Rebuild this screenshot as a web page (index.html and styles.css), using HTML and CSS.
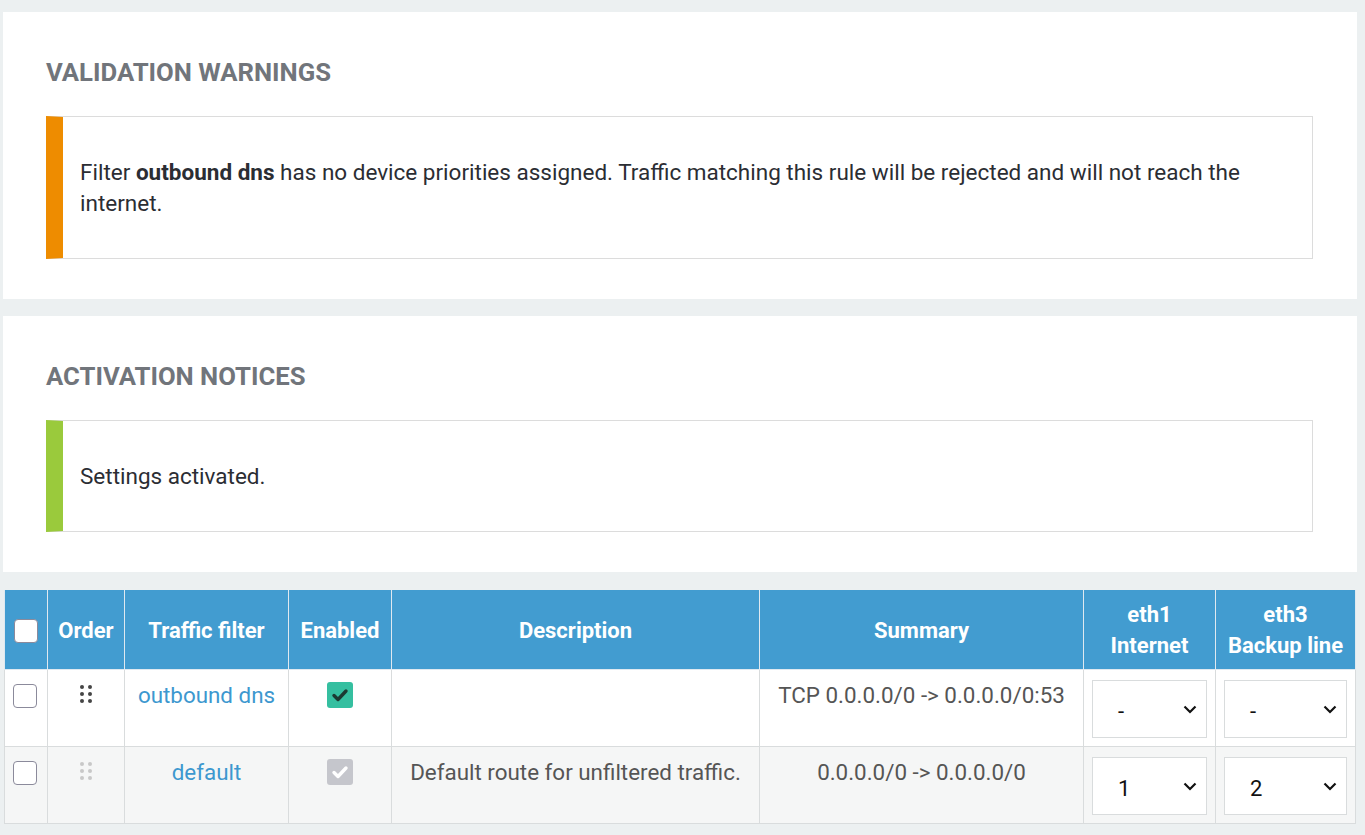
FILE: index.html
```html
<!DOCTYPE html>
<html lang="en">
<head>
<meta charset="utf-8">
<title>Traffic filters</title>
<link rel="stylesheet" href="styles.css">
</head>
<body>
<div class="page">
  <section class="panel">
    <h2 class="panel-title">VALIDATION WARNINGS</h2>
    <div class="alert alert-warning">
      Filter <strong>outbound dns</strong> has no device priorities assigned. Traffic matching this rule will be rejected and will not reach the internet.
    </div>
  </section>
  <section class="panel">
    <h2 class="panel-title">ACTIVATION NOTICES</h2>
    <div class="alert alert-success">Settings activated.</div>
  </section>
  <div class="table-wrap">
    <table class="grid">
      <colgroup>
        <col class="c-check"><col class="c-order"><col class="c-name"><col class="c-enabled">
        <col class="c-desc"><col class="c-summary"><col class="c-eth1"><col class="c-eth3">
      </colgroup>
      <thead>
        <tr>
          <th class="th-check"><span class="cb cb-head"></span></th>
          <th>Order</th>
          <th>Traffic filter</th>
          <th>Enabled</th>
          <th>Description</th>
          <th>Summary</th>
          <th>eth1<br>Internet</th>
          <th>eth3<br>Backup line</th>
        </tr>
      </thead>
      <tbody>
        <tr>
          <td class="cell-check"><span class="cb"></span></td>
          <td class="center"><span class="drag"><i></i><i></i><i></i><i></i><i></i><i></i></span></td>
          <td class="center"><a class="link" href="#">outbound dns</a></td>
          <td class="center"><span class="toggle on"><svg viewBox="0 0 26 26" width="26" height="26"><path d="M7 13.5l4 4 8-8.5" fill="none" stroke="#1b3a32" stroke-width="3.4" stroke-linecap="round" stroke-linejoin="round"/></svg></span></td>
          <td class="center"></td>
          <td class="center">TCP 0.0.0.0/0 -&gt; 0.0.0.0/0:53</td>
          <td class="cell-select"><div class="select"><span>-</span><svg viewBox="0 0 14 9" width="14" height="9"><path d="M1.5 1.5l5.5 5.5 5.5-5.5" fill="none" stroke="#111" stroke-width="2.2"/></svg></div></td>
          <td class="cell-select"><div class="select"><span>-</span><svg viewBox="0 0 14 9" width="14" height="9"><path d="M1.5 1.5l5.5 5.5 5.5-5.5" fill="none" stroke="#111" stroke-width="2.2"/></svg></div></td>
        </tr>
        <tr class="alt">
          <td class="cell-check"><span class="cb"></span></td>
          <td class="center"><span class="drag disabled"><i></i><i></i><i></i><i></i><i></i><i></i></span></td>
          <td class="center"><a class="link" href="#">default</a></td>
          <td class="center"><span class="toggle off"><svg viewBox="0 0 26 26" width="26" height="26"><path d="M7 13.5l4 4 8-8.5" fill="none" stroke="#ffffff" stroke-width="3.4" stroke-linecap="round" stroke-linejoin="round"/></svg></span></td>
          <td class="center">Default route for unfiltered traffic.</td>
          <td class="center">0.0.0.0/0 -&gt; 0.0.0.0/0</td>
          <td class="cell-select"><div class="select"><span>1</span><svg viewBox="0 0 14 9" width="14" height="9"><path d="M1.5 1.5l5.5 5.5 5.5-5.5" fill="none" stroke="#111" stroke-width="2.2"/></svg></div></td>
          <td class="cell-select"><div class="select"><span>2</span><svg viewBox="0 0 14 9" width="14" height="9"><path d="M1.5 1.5l5.5 5.5 5.5-5.5" fill="none" stroke="#111" stroke-width="2.2"/></svg></div></td>
        </tr>
      </tbody>
    </table>
  </div>
</div>
</body>
</html>
```
FILE: styles.css
```css
html, body {
  margin: 0;
  padding: 0;
  background: #ecf0f1;
  font-family: Roboto, "Liberation Sans", sans-serif;
  color: #2b2d33;
}

.page {
  padding: 12px 8px 12px 3px;
  display: flex;
  flex-direction: column;
  gap: 17px;
}

.panel {
  background: #ffffff;
  padding: 46px 44px 40px 43px;
}

.panel-title {
  margin: 0 0 29px;
  font-size: 25.7px;
  line-height: 29px;
  font-weight: 700;
  color: #71757b;
}

.alert {
  border: 1px solid #dcdcdc;
  border-left-width: 17px;
  padding: 40px 17px 39px 17px;
  font-size: 22.5px;
  line-height: 31px;
  color: #2b2d33;
}

.alert strong {
  font-weight: 700;
}

.alert-warning {
  border-left-color: #ee8c00;
}

.alert-success {
  border-left-color: #9aca3c;
}

.table-wrap {
  padding: 0 2px 0 1px;
  margin-top: 1px;
}

.grid {
  width: 100%;
  border-collapse: collapse;
  table-layout: fixed;
  font-size: 22.4px;
  line-height: 31px;
  color: #555555;
}

.c-check { width: 43px; }
.c-order { width: 77px; }
.c-name { width: 164px; }
.c-enabled { width: 103px; }
.c-desc { width: 368px; }
.c-summary { width: 324px; }
.c-eth1 { width: 132px; }
.c-eth3 { width: 140px; }

.grid th {
  background: #429cd0;
  color: #ffffff;
  font-size: 22px;
  font-weight: 700;
  padding: 9px 4px 8px;
  border: 1px solid #dfe9f0;
  border-top: none;
  text-align: center;
  vertical-align: middle;
  white-space: nowrap;
}

.grid td {
  background: #ffffff;
  border: 1px solid #d9dcdd;
  padding: 10px 6px 8px;
  vertical-align: top;
}

.grid tr.alt td {
  background: #f5f6f6;
}

.center {
  text-align: center;
}

.grid .th-check {
  text-align: left;
  padding-left: 9px;
}

.grid .cell-check {
  text-align: left;
  padding-left: 8px;
}

.cb {
  display: inline-block;
  width: 24px;
  height: 24px;
  box-sizing: border-box;
  border: 1px solid #8b8a9b;
  border-radius: 4px;
  background: #ffffff;
  vertical-align: middle;
  margin-top: -3px;
}

.cb-head {
  margin-top: -2px;
}

.drag {
  display: inline-grid;
  grid-template-columns: 4px 4px;
  column-gap: 4px;
  row-gap: 3px;
  vertical-align: middle;
  margin-top: -6px;
}

.drag i {
  display: block;
  width: 4px;
  height: 4px;
  border-radius: 50%;
  background: #454545;
}

.drag.disabled i {
  background: #c8c8c8;
}

.link {
  color: #3d98cf;
  text-decoration: none;
}

.toggle {
  display: inline-flex;
  width: 26px;
  height: 26px;
  border-radius: 3px;
  vertical-align: middle;
  margin-top: -4px;
}

.toggle.on {
  background: #35bfa0;
}

.toggle.off {
  background: #c5c6cc;
}

.grid .cell-select {
  padding: 10px 8px 8px;
}

.select {
  height: 58px;
  box-sizing: border-box;
  border: 1px solid #d9dcdd;
  background: #ffffff;
  display: flex;
  align-items: center;
  justify-content: space-between;
  padding: 0 9px 0 25px;
  color: #111111;
  font-size: 22px;
}

.select span {
  margin-top: 4px;
}
```
